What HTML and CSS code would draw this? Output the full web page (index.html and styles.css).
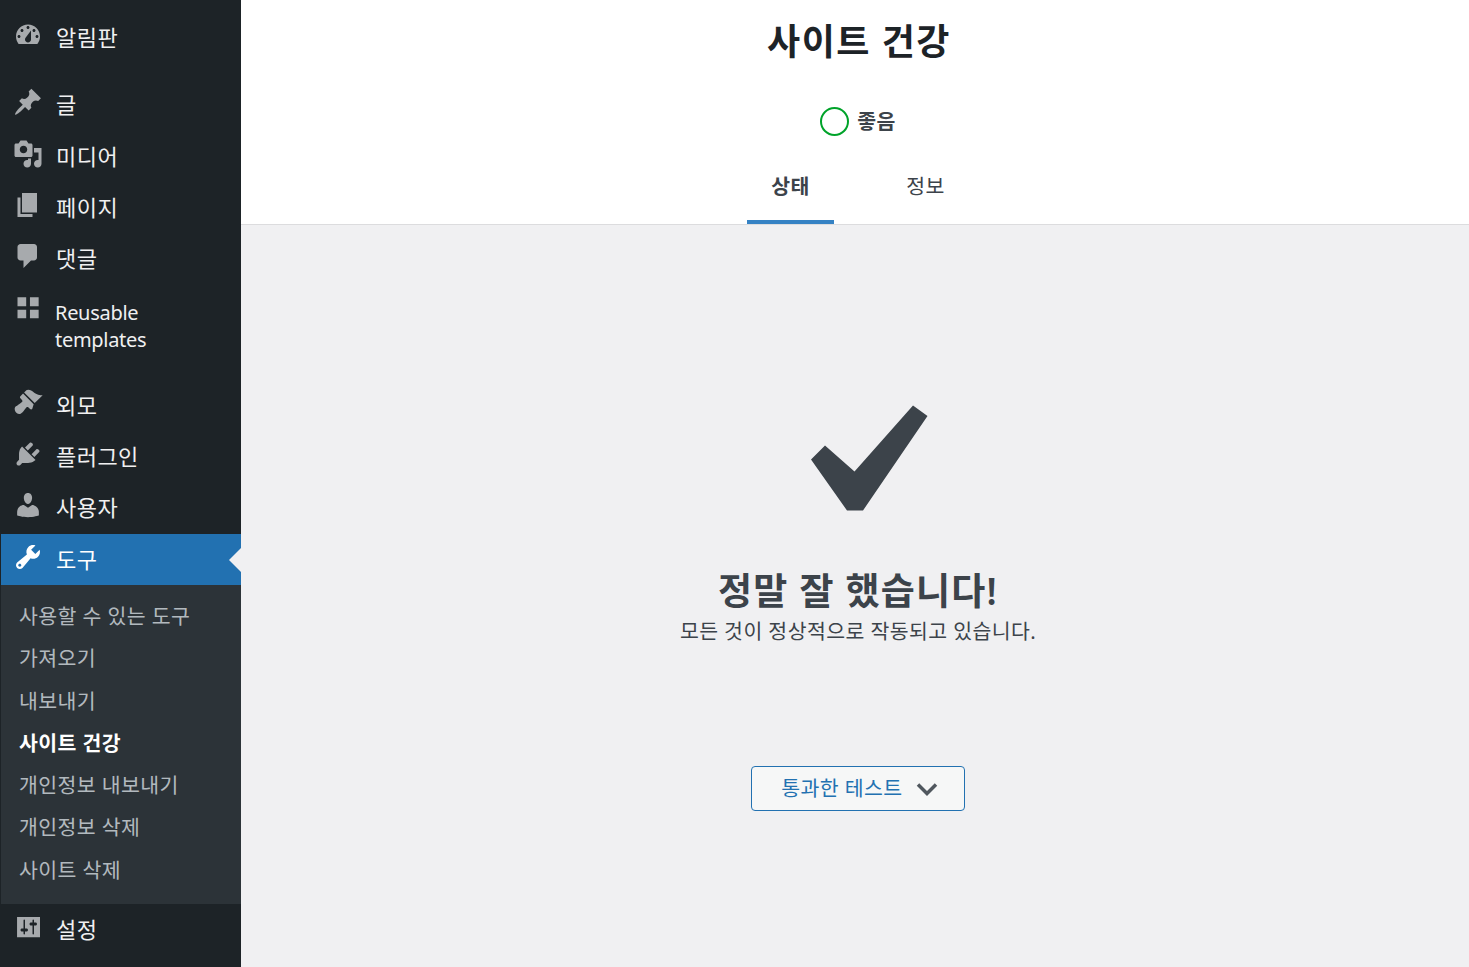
FILE: index.html
```html
<!DOCTYPE html>
<html lang="ko">
<head>
<meta charset="utf-8">
<title>사이트 건강</title>
<link rel="stylesheet" href="styles.css">
</head>
<body>
<div class="layout">
  <nav class="sidebar">
    <a class="item"><svg class="icon" viewBox="0 0 20 20"><path fill-rule="evenodd" d="M3.76 16h12.48c1.1-1.37 1.76-3.11 1.76-5 0-4.42-3.58-8-8-8s-8 3.58-8 8c0 1.89.66 3.63 1.76 5zM10 4c.55 0 1 .45 1 1s-.45 1-1 1-1-.45-1-1 .45-1 1-1zM6 6c.55 0 1 .45 1 1s-.45 1-1 1-1-.45-1-1 .45-1 1-1zm8 0c.55 0 1 .45 1 1s-.45 1-1 1-1-.45-1-1 .45-1 1-1zm-5.37 5.55L12 7v6c0 1.1-.9 2-2 2s-2-.9-2-2c0-.57.24-1.08.63-1.45zM4 10c.55 0 1 .45 1 1s-.45 1-1 1-1-.45-1-1 .45-1 1-1zm12 0c.55 0 1 .45 1 1s-.45 1-1 1-1-.45-1-1 .45-1 1-1z"/></svg><span>알림판</span></a>
    <a class="item sep-top item-extra"><svg class="icon" viewBox="0 0 20 20"><path d="M10.44 3.02l1.82-1.82 6.36 6.35-1.83 1.82c-1.05-.68-2.48-.57-3.41.36l-.75.75c-.92.93-1.04 2.35-.35 3.41l-1.83 1.82-2.41-2.41-2.8 2.79c-.42.42-3.38 2.71-3.8 2.29s1.86-3.39 2.28-3.81l2.79-2.79L4.1 9.36l1.83-1.82c1.05.69 2.48.57 3.4-.36l.75-.75c.93-.92 1.05-2.35.36-3.41z"/></svg><span>글</span></a>
    <a class="item"><svg class="icon" viewBox="0 0 20 20"><path fill-rule="evenodd" d="M13 11V4c0-.55-.45-1-1-1h-1.67L9 1H5L3.67 3H2c-.55 0-1 .45-1 1v7c0 .55.45 1 1 1h10c.55 0 1-.45 1-1zM7 4.5c1.38 0 2.5 1.12 2.5 2.5S8.38 9.5 7 9.5 4.5 8.38 4.5 7 5.62 4.5 7 4.5zM14 6h5v10.5c0 1.38-1.12 2.5-2.5 2.5S14 17.88 14 16.5s1.12-2.5 2.5-2.5c.17 0 .34.02.5.05V9h-3V6zm-4 8.05V13h2v3.5c0 1.38-1.12 2.5-2.5 2.5S7 17.88 7 16.5 8.12 14 9.5 14c.17 0 .34.02.5.05z"/></svg><span>미디어</span></a>
    <a class="item"><svg class="icon" viewBox="0 0 20 20"><path d="M6 15V2h10v13H6zm-1 1h8v2H3V5h2v11z"/></svg><span>페이지</span></a>
    <a class="item"><svg class="icon" viewBox="0 0 20 20"><path d="M5 2h9c1.1 0 2 .9 2 2v7c0 1.1-.9 2-2 2h-2l-5 5v-5H5c-1.1 0-2-.9-2-2V4c0-1.1.9-2 2-2z"/></svg><span>댓글</span></a>
    <a class="item item-tall"><svg class="icon" viewBox="0 0 20 20"><path d="M3 3.500h5.800v6H3zM11.300 3.500h5.800v6h-5.800zM3 11.800h5.800v5.700H3zM11.300 11.800h5.800v5.700h-5.800z"/></svg><span>Reusable<br>templates</span></a>
    <a class="item sep-top-wide"><svg class="icon" viewBox="0 0 20 20"><path d="M14.480 11.060L7.410 3.990l1.500-1.500c.5-.56 2.300-.47 3.510.32 1.210.8 1.430 1.280 2.910 2.100 1.180.64 2.450 1.260 4.450.85zm-.71.71L6.700 4.700 4.930 6.470c-.39.39-.39 1.020 0 1.410l1.060 1.060c.39.39.39 1.030 0 1.420-.6.6-1.430 1.110-2.210 1.690-.35.26-.7.53-1.010.84C1.430 13.230.91 14.400 1.200 15.700c.19.9.8 1.850 1.690 2.370.9.52 2.140.45 3.490-.9.31-.31.58-.66.84-1.010.58-.78 1.090-1.610 1.690-2.210.39-.39 1.030-.39 1.420 0l1.060 1.060c.39.39 1.020.39 1.410 0z" transform="translate(0 -1)"/></svg><span>외모</span></a>
    <a class="item"><svg class="icon" viewBox="0 0 20 20"><path d="M13.110 4.360L9.870 7.600 8 5.730l3.240-3.240c.35-.34 1.050-.2 1.560.32.52.51.66 1.210.31 1.550zm-8 1.770l.91-1.120 9.010 9.010-1.190.84c-.71.71-2.630 1.160-3.820 1.160H6.140L4.900 17.260c-.59.59-1.540.59-2.120 0-.59-.58-.59-1.530 0-2.120l1.240-1.240v-3.880c0-1.130.4-3.190 1.090-3.890zm7.260 3.970l3.240-3.240c.34-.35 1.040-.21 1.550.31.52.51.66 1.210.31 1.550l-3.240 3.250z"/></svg><span>플러그인</span></a>
    <a class="item item-extra"><svg class="icon" viewBox="0 0 20 20"><path d="M10 9.250c-2.270 0-2.730-3.440-2.730-3.440C7 4.020 7.820 2 9.970 2c2.160 0 2.980 2.020 2.710 3.810 0 0-.41 3.440-2.680 3.440zm0 2.570L12.720 10c2.390 0 4.520 2.330 4.520 4.530v2.490s-3.650 1.130-7.240 1.130c-3.650 0-7.240-1.130-7.240-1.130v-2.490c0-2.250 1.940-4.480 4.470-4.480z"/></svg><span>사용자</span></a>
    <a class="item item-active"><svg class="icon" viewBox="0 0 20 20"><path fill-rule="evenodd" d="M16.680 9.770c-1.340 1.340-3.300 1.670-4.950.99l-5.410 6.520c-.99.99-2.590.99-3.580 0s-.99-2.590 0-3.570l6.520-5.420c-.68-1.650-.35-3.610.99-4.950 1.280-1.280 3.120-1.620 4.720-1.060l-2.890 2.890 2.820 2.820 2.860-2.870c.53 1.580.18 3.390-1.080 4.650zM3.810 16.210c.4.39 1.040.39 1.430 0 .4-.4.4-1.040 0-1.430-.39-.4-1.030-.4-1.430 0-.39.39-.39 1.030 0 1.430z"/></svg><span>도구</span></a>
    <ul class="submenu">
      <li>사용할 수 있는 도구</li>
      <li>가져오기</li>
      <li>내보내기</li>
      <li class="sub-current">사이트 건강</li>
      <li>개인정보 내보내기</li>
      <li>개인정보 삭제</li>
      <li>사이트 삭제</li>
    </ul>
    <a class="item"><svg class="icon" viewBox="0 0 20 20"><path fill-rule="evenodd" d="M2.700 3.300h15.300v13.600H2.700zM8 11h1c.55 0 1 .45 1 1s-.45 1-1 1H8v1.500c0 .28-.22.5-.5.5s-.5-.22-.5-.5V13H6c-.55 0-1-.45-1-1s.45-1 1-1h1V5.500c0-.28.22-.5.5-.5s.5.22.5.5V11zm5-2h-1c-.55 0-1-.45-1-1s.45-1 1-1h1V5.500c0-.28.22-.5.5-.5s.5.22.5.5V7h1c.55 0 1 .45 1 1s-.45 1-1 1h-1v5.500c0 .28-.22.5-.5.5s-.5-.22-.5-.5V9z"/></svg><span>설정</span></a>
  </nav>
  <main class="main">
    <header class="header">
      <h1 class="title">사이트 건강</h1>
      <div class="status"><span class="ring"></span><span class="status-label">좋음</span></div>
      <div class="tabs">
        <a class="tab tab-active">상태</a>
        <a class="tab">정보</a>
      </div>
    </header>
    <section class="body">
      <svg class="check" viewBox="0 0 117 106"><path d="M102 0.500L116.500 11 52 105.500H36L0 54.500 14 40.500 43.500 66.500z"/></svg>
      <h2 class="done">정말 잘 했습니다!</h2>
      <p class="desc">모든 것이 정상적으로 작동되고 있습니다.</p>
      <button class="toggle" type="button"><span class="toggle-label">통과한 테스트</span><svg class="chev" viewBox="0 0 22 14"><path d="M2 2.500l9 9 9-9"/></svg></button>
    </section>
  </main>
</div>
</body>
</html>
```

FILE: styles.css
```css
* {
  box-sizing: border-box;
}

html,
body {
  margin: 0;
  height: 100%;
  overflow: hidden;
}

body {
  font-family: "Noto Sans", "Noto Sans CJK KR", sans-serif;
  color: #3c434a;
  background: #f0f0f2;
}

.layout {
  display: flex;
  height: 967px;
}

.sidebar {
  width: 241px;
  flex: none;
  padding-top: 12px;
  background: #1d2327;
}

.item {
  display: flex;
  align-items: flex-start;
  height: 51px;
  margin-left: 1px;
  padding: 8px 0 0 12px;
  color: #f0f0f1;
  font-size: 22px;
  line-height: 35px;
}

.item span {
  margin-left: 13px;
  letter-spacing: 0.450px;
}

.item-extra {
  height: 52px;
}

.icon {
  flex: none;
  width: 30px;
  height: 30px;
  fill: #a7aaad;
}

.sep-top {
  margin-top: 16px;
}

.sep-top-wide {
  margin-top: 18px;
}

.item-tall {
  height: 78px;
}

.item-tall span {
  margin-left: 12px;
  padding-top: 7px;
  font-size: 20px;
  line-height: 27px;
  letter-spacing: -0.300px;
}

.item-active {
  position: relative;
  background: #2271b1;
  color: #fff;
}

.item-active .icon {
  fill: #fff;
}

.item-active::after {
  content: "";
  position: absolute;
  right: 0;
  top: 14px;
  border: 12px solid transparent;
  border-left: 0;
  border-right-color: #f0f0f2;
}

.submenu {
  list-style: none;
  margin: 0 0 0 1px;
  padding: 11px 0 12px;
  background: #2c3338;
  color: rgba(240, 246, 252, 0.7);
  font-size: 20.500px;
  letter-spacing: 0.400px;
}

.submenu li {
  height: 42.300px;
  padding-left: 18px;
  line-height: 41px;
}

.sub-current {
  color: #fff;
  font-weight: 700;
}

.main {
  flex: 1;
  display: flex;
  flex-direction: column;
}

.header {
  display: flex;
  flex-direction: column;
  align-items: center;
  height: 225px;
  padding-left: 6px;
  background: #fff;
  border-bottom: 1px solid #dcdcde;
}

.title {
  margin: 14px 0 0;
  padding-left: 2px;
  color: #1d2327;
  font-size: 36px;
  font-weight: 600;
  line-height: 56px;
  letter-spacing: 1.500px;
}

.status {
  display: flex;
  align-items: center;
  margin-top: 35px;
  height: 32px;
  gap: 8px;
}

.ring {
  width: 29px;
  height: 29px;
  border: 2px solid #00a32a;
  border-radius: 50%;
}

.status-label {
  font-size: 20.500px;
  font-weight: 700;
  line-height: 31px;
  letter-spacing: 0.500px;
}

.tabs {
  display: flex;
  gap: 48px;
  margin-top: 35px;
  height: 52px;
}

.tab {
  display: block;
  width: 87px;
  text-align: center;
  font-size: 20.500px;
  line-height: 28px;
  letter-spacing: 0.500px;
}

.tab-active {
  border-bottom: 4px solid #3582c4;
  font-weight: 600;
}

.body {
  flex: 1;
  display: flex;
  flex-direction: column;
  align-items: center;
  padding-left: 6px;
}

.check {
  width: 117px;
  height: 106px;
  margin: 180px 0 0 22px;
  fill: #3c434a;
}

.done {
  margin: 57px 0 0;
  font-size: 37px;
  font-weight: 600;
  line-height: 45px;
  letter-spacing: 1.200px;
}

.desc {
  margin: 0;
  font-size: 20.500px;
  line-height: 36px;
  letter-spacing: 0.400px;
}

.toggle {
  display: flex;
  align-items: center;
  justify-content: center;
  gap: 13px;
  width: 214px;
  height: 45px;
  margin-top: 117px;
  padding: 0 0 0 3px;
  border: 1px solid #2271b1;
  border-radius: 4px;
  background: #f6f7f7;
  color: #2271b1;
  font: inherit;
  font-size: 20.500px;
}

.toggle-label {
  padding-bottom: 4px;
  letter-spacing: 0.400px;
}

.chev {
  width: 22px;
  height: 14px;
  fill: none;
  stroke: #50575e;
  stroke-width: 3.500;
}
```
